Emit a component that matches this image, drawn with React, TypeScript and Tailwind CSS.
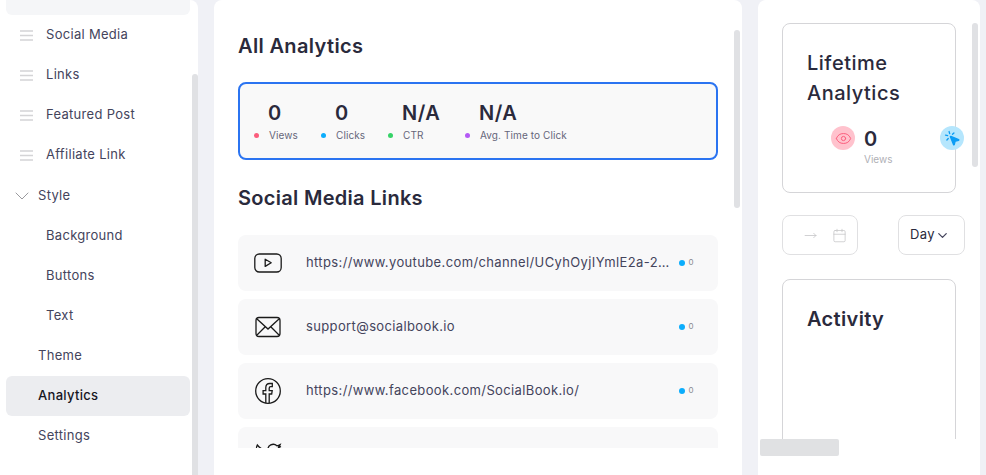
import React from "react";
import { ChevronDown, Eye, MousePointerClick, Calendar, MoveRight } from "lucide-react";

const Grip = () => (
  <svg width="13" height="11" viewBox="0 0 13 11" className="shrink-0">
    <path d="M0 1h13M0 5.5h13M0 10h13" stroke="#d4d4d6" strokeWidth="1.6" />
  </svg>
);

const YoutubeIcon = () => (
  <svg width="30" height="30" viewBox="0 0 30 30" fill="none" stroke="#1a1a1a" strokeWidth="1.3">
    <rect x="1.8" y="6" width="26.4" height="18" rx="4.5" />
    <path d="M12.2 11.2v7.2l6-3.6z" strokeLinejoin="round" />
  </svg>
);

const MailIcon = () => (
  <svg width="30" height="30" viewBox="0 0 30 30" fill="none" stroke="#1a1a1a" strokeWidth="1.3">
    <rect x="3" y="5.5" width="24" height="19" rx="3" />
    <path d="M4 7l11 10L26 7M4 23l8.5-8.5M26 23l-8.5-8.5" />
  </svg>
);

const FacebookIcon = () => (
  <svg width="30" height="30" viewBox="0 0 30 30" fill="none" stroke="#1a1a1a" strokeWidth="1.3">
    <circle cx="15" cy="15" r="12.3" />
    <path d="M12.8 27v-9h-2.7v-3.4h2.7v-3c0-2.7 1.6-4.1 4-4.1h2.5v3.2h-1.6c-1.1 0-1.5.5-1.5 1.5v2.4h3l-.5 3.4h-2.5v9" />
  </svg>
);

const TwitterIcon = () => (
  <svg width="30" height="30" viewBox="0 0 30 30" fill="none" stroke="#1a1a1a" strokeWidth="1.3">
    <path d="M28 6.5c-1 .5-2 .8-3 1 1-.7 1.800-1.700 2.200-2.900-1 .6-2.100 1-3.300 1.200A5.300 5.300 0 0 0 15 10.500C10.700 10.300 6.900 8.200 4.300 5c-1.400 2.400-.7 5.500 1.600 7-.8 0-1.600-.2-2.300-.6 0 2.500 1.800 4.700 4.200 5.200-.8.200-1.500.2-2.300.1.700 2.100 2.600 3.600 4.900 3.600-2.200 1.700-4.900 2.500-7.700 2.200 8 5 19.500 1 20.900-11.500 0-.3 0-.5 0-.8 1-.7 1.800-1.600 2.400-2.700z" />
  </svg>
);

const sidebarDrag = ["Social Media", "Links", "Featured Post", "Affiliate Link"];
const styleItems = ["Background", "Buttons", "Text"];

const stats = [
  { value: "0", label: "Views", dot: "bg-[#fb5d7c]", width: "w-[67px]" },
  { value: "0", label: "Clicks", dot: "bg-[#0cadfc]", width: "w-[67px]" },
  { value: "N/A", label: "CTR", dot: "bg-[#37d368]", width: "w-[77px]" },
  { value: "N/A", label: "Avg. Time to Click", dot: "bg-[#b45af5]", width: "w-auto" },
];

const links = [
  { icon: YoutubeIcon, url: "https://www.youtube.com/channel/UCyhOyjIYmlE2a-2cdVbKwXg" },
  { icon: MailIcon, url: "support@socialbook.io" },
  { icon: FacebookIcon, url: "https://www.facebook.com/SocialBook.io/" },
  { icon: TwitterIcon, url: "https://twitter.com/SocialBook" },
];

const Sidebar = () => (
  <aside className="relative w-[198px] shrink-0 h-full bg-white rounded-tr-lg overflow-hidden text-[13px] tracking-[0.3px] text-[#44445c]">
    <div className="ml-[6px] w-[184px] h-[15px] bg-[#f5f6f8] rounded-b-md" />
    <ul className="w-[190px]">
      {sidebarDrag.map((name) => (
        <li key={name} className="h-10 flex items-center pl-[20px] gap-[13px]">
          <Grip />
          <span>{name}</span>
        </li>
      ))}
      <li className="h-[41px] flex items-center pl-[10px] gap-[4px]">
        <ChevronDown size={24} color="#9a9a9e" strokeWidth={1} />
        <span>Style</span>
      </li>
      {styleItems.map((name) => (
        <li key={name} className="h-10 flex items-center pl-[46px]">
          {name}
        </li>
      ))}
      <li className="h-10 flex items-center pl-[38px]">Theme</li>
      <li className="h-10 ml-[6px] w-[184px] rounded-md bg-[#ecedf0] flex items-center pl-[32px] text-[#16161f] font-medium">
        Analytics
      </li>
      <li className="h-10 flex items-center pl-[38px]">Settings</li>
    </ul>
    <div className="absolute right-0 top-[74px] bottom-0 w-[6px] rounded-t bg-[#e0e1e4]" />
  </aside>
);

const MainPanel = () => (
  <main className="relative w-[528px] shrink-0 h-full bg-white rounded-t-lg overflow-hidden">
    <div className="h-[448px] overflow-hidden px-6 pt-[32px]">
      <h2 className="text-[20px] leading-[28px] font-semibold tracking-[0.35px] text-[#2a2a3c]">All Analytics</h2>
      <div className="mt-[22px] h-[78px] border-2 border-[#2b74f1] rounded-lg bg-[#f9f9f9] flex items-start pl-[14px] pt-[16px]">
        {stats.map((s) => (
          <div key={s.label} className={s.width}>
            <div className="pl-[14px] text-[20px] leading-[26px] font-semibold tracking-[0.5px] text-[#2a2a3c]">{s.value}</div>
            <div className="flex items-center gap-[10px] mt-[2px] text-[10px] leading-[14px] tracking-[0.1px] text-[#66667a]">
              <span className={`w-[5px] h-[5px] rounded-full ${s.dot}`} />
              <span className="whitespace-nowrap">{s.label}</span>
            </div>
          </div>
        ))}
      </div>
      <h2 className="mt-[24px] text-[20px] leading-[28px] font-semibold tracking-[0.3px] text-[#2a2a3c]">Social Media Links</h2>
      <div className="mt-[23px] flex flex-col gap-2">
        {links.map(({ icon: Icon, url }) => (
          <div key={url} className="h-14 shrink-0 rounded-lg bg-[#f8f8f9] flex items-center pl-[15px] pr-[24px] text-[13px] tracking-[0.37px] text-[#44445c]">
            <Icon />
            <span className="ml-[23px] w-[364px] truncate">{url}</span>
            <span className="ml-auto flex items-center gap-[4px] text-[8px] text-[#8a8a92]">
              <span className="w-[6px] h-[6px] rounded-full bg-[#0cadfc]" />
              <span className="mb-[2px]">0</span>
            </span>
          </div>
        ))}
      </div>
    </div>
    <div className="absolute right-[2px] top-[30px] h-[178px] w-[6px] rounded bg-[#e0e1e4]" />
  </main>
);

const RightPanel = () => (
  <section className="relative w-[222px] shrink-0 h-full bg-white rounded-t-lg overflow-hidden">
    <div className="h-[439px] overflow-hidden pl-6 pt-[23px]">
      <div className="w-[174px] h-[170px] border border-[#d5d5d8] rounded-lg pl-6 pt-6">
        <h3 className="text-[20px] leading-[30px] font-medium tracking-[0.5px] text-[#2a2a3c]">
          Lifetime
          <br />
          Analytics
        </h3>
        <div className="flex mt-[18px] ml-[24px]">
          <div className="flex items-start gap-[9px] w-[109px] shrink-0">
            <span className="w-6 h-6 rounded-full bg-[#ffc2cd] flex items-center justify-center shrink-0">
              <Eye size={17} color="#fb5d7c" strokeWidth={1.4} />
            </span>
            <div className="pt-[1px]">
              <div className="text-[20px] leading-6 font-semibold text-[#2a2a3c]">0</div>
              <div className="text-[10px] leading-[14px] mt-[1px] text-[#b0b0b6]">Views</div>
            </div>
          </div>
          <span className="w-6 h-6 rounded-full bg-[#b5e6fd] flex items-center justify-center shrink-0">
            <MousePointerClick size={17} color="#0c9df5" fill="#0c9df5" strokeWidth={1.9} />
          </span>
        </div>
      </div>
      <div className="flex mt-[22px]">
        <div className="w-[76px] h-10 border border-[#e0e0e2] rounded-lg flex items-center pl-[21px] gap-[15px]">
          <MoveRight size={13} color="#bdbdc0" strokeWidth={1.3} />
          <Calendar size={15} color="#c4c4c6" strokeWidth={1.2} />
        </div>
        <div className="ml-[40px] w-[67px] h-10 border border-[#e0e0e2] rounded-lg flex items-center pl-[11px] text-[13px] tracking-[0.4px] text-[#2a2a3c]">
          Day
          <ChevronDown size={15} color="#44445c" />
        </div>
      </div>
      <div className="mt-[24px] w-[174px] h-[200px] border border-[#d5d5d8] rounded-lg pl-6 pt-[24px]">
        <h3 className="text-[20px] leading-[30px] font-semibold tracking-[0.35px] text-[#2a2a3c]">Activity</h3>
      </div>
    </div>
    <div className="absolute right-[2px] top-[23px] h-[144px] w-[6px] rounded bg-[#e0e1e4]" />
    <div className="absolute left-[2px] top-[439px] h-[17px] w-[79px] rounded-[2px] bg-[#e0e1e3]" />
  </section>
);

export default function App() {
  return (
    <div className="w-[986px] h-[475px] overflow-hidden bg-[#f0f1f6] flex gap-4 font-['Inter',sans-serif]">
      <Sidebar />
      <MainPanel />
      <RightPanel />
    </div>
  );
}
